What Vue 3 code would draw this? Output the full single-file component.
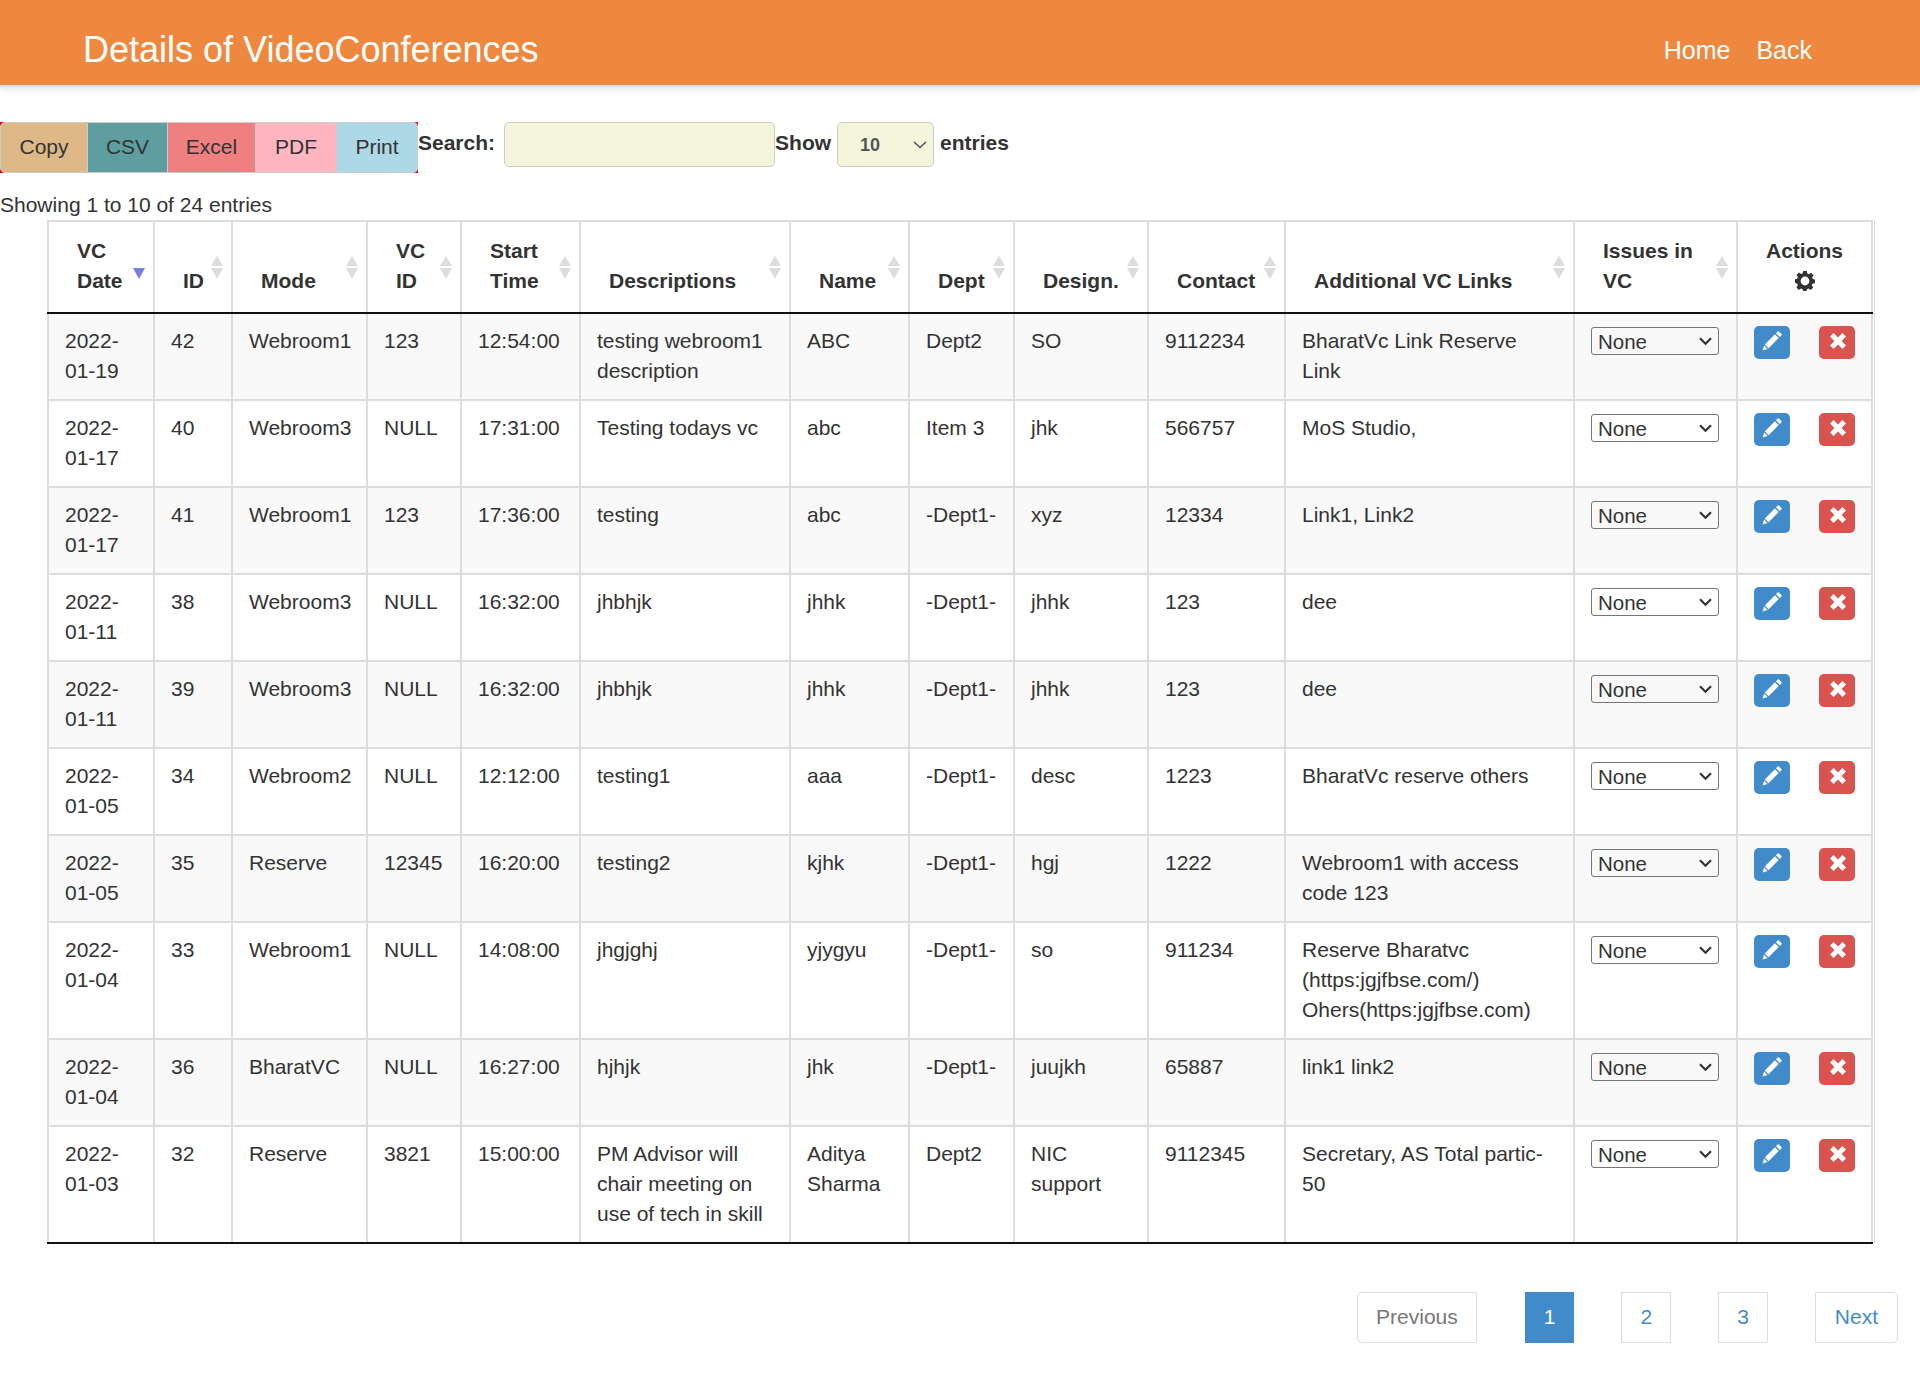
<template>
  <div class="page">
    <header class="topbar">
      <h1 class="topbar__title">Details of VideoConferences</h1>
      <nav class="topbar__nav">
        <a href="#">Home</a>
        <a href="#">Back</a>
      </nav>
    </header>

    <div class="toolbar">
      <div class="exports">
        <button v-for="b in exportButtons" :key="b" class="exports__btn" :class="'exports__btn--' + b.toLowerCase()">{{ b }}</button>
      </div>
      <label class="toolbar__label toolbar__label--search">Search:</label>
      <input type="text" class="search" />
      <label class="toolbar__label">Show</label>
      <div class="length">
        <span>10</span>
        <svg width="14" height="8" viewBox="0 0 14 8"><path d="M1 1l6 5.5L13 1" fill="none" stroke="#555" stroke-width="1.6" /></svg>
      </div>
      <label class="toolbar__label">entries</label>
    </div>

    <p class="info">Showing 1 to 10 of 24 entries</p>

    <div class="grid-wrap">
      <table class="grid">
        <colgroup>
          <col v-for="w in colWidths" :key="w.id" :style="{ width: w.px + 'px' }" />
        </colgroup>
        <thead>
          <tr>
            <th v-for="h in headers" :key="h.label">
              {{ h.label }}
              <svg class="sort" width="12" height="23" viewBox="0 0 12 23">
                <path v-if="h.sort === 'both'" d="M6 0l6 10H0z" fill="#ddd" />
                <path d="M0 12h12L6 23z" :fill="h.sort === 'both' ? '#ddd' : '#7a7ede'" />
              </svg>
            </th>
            <th class="grid__actions-head">
              Actions
              <svg class="gear" width="20" height="20" viewBox="0 0 20 20">
                <path fill-rule="evenodd" fill="#333" d="M8.2 0h3.6l.5 2.6 1.6.7 2.2-1.5 2.5 2.5-1.5 2.2.7 1.6 2.2.5v3.6l-2.6.5-.7 1.6 1.5 2.2-2.5 2.5-2.2-1.5-1.6.7-.5 2.6H8.2l-.5-2.6-1.6-.7-2.2 1.5-2.5-2.5 1.5-2.2-.7-1.6L0 11.8V8.2l2.2-.5.7-1.6-1.5-2.2 2.5-2.5 2.2 1.5 1.6-.7zM10 5.6a4.4 4.4 0 1 0 0 8.8 4.4 4.4 0 0 0 0-8.8z" />
              </svg>
            </th>
          </tr>
        </thead>
        <tbody>
          <tr v-for="r in rows" :key="r.id">
            <td>{{ r.date }}</td>
            <td>{{ r.id }}</td>
            <td>{{ r.mode }}</td>
            <td>{{ r.vcId }}</td>
            <td>{{ r.time }}</td>
            <td>{{ r.desc }}</td>
            <td>{{ r.name }}</td>
            <td>{{ r.dept }}</td>
            <td>{{ r.design }}</td>
            <td>{{ r.contact }}</td>
            <td>{{ r.links }}</td>
            <td>
              <div class="issue-wrap">
                <select class="issue">
                  <option>None</option>
                </select>
                <svg class="issue-wrap__arrow" width="13" height="9" viewBox="0 0 13 9">
                  <path d="M1 1.2l5.5 5.6L12 1.2" fill="none" stroke="#333" stroke-width="2.2" />
                </svg>
              </div>
            </td>
            <td>
              <div class="actions">
                <button class="icon-btn icon-btn--edit">
                  <svg width="20" height="20" viewBox="0 0 20 20">
                    <path fill="#fff" d="M14 2.2 15.6.6a1 1 0 0 1 1.4 0l2.4 2.4a1 1 0 0 1 0 1.4L17.8 6zM12.9 3.3l3.8 3.8L6.6 17.2 2.8 13.4zM2.1 14.4l3.5 3.5L.6 19.4z" />
                  </svg>
                </button>
                <button class="icon-btn icon-btn--remove">
                  <svg width="18" height="18" viewBox="0 0 18 18">
                    <path fill="#fff" d="M4.6 1 9 5.4 13.4 1 17 4.6 12.6 9 17 13.4 13.4 17 9 12.6 4.6 17 1 13.4 5.4 9 1 4.6z" />
                  </svg>
                </button>
              </div>
            </td>
          </tr>
        </tbody>
      </table>
    </div>

    <div class="pager">
      <a href="#" class="pager__item pager__item--prev">Previous</a>
      <a href="#" class="pager__item pager__item--active">1</a>
      <a href="#" class="pager__item pager__item--num">2</a>
      <a href="#" class="pager__item pager__item--num">3</a>
      <a href="#" class="pager__item pager__item--next">Next</a>
    </div>
  </div>
</template>

<script setup>
const exportButtons = ['Copy', 'CSV', 'Excel', 'PDF', 'Print']

const colWidths = [106, 78, 135, 94, 119, 210, 119, 105, 134, 137, 289, 163, 135].map((px, id) => ({ id, px }))

const headers = [
  { label: 'VC Date', sort: 'desc' },
  { label: 'ID', sort: 'both' },
  { label: 'Mode', sort: 'both' },
  { label: 'VC ID', sort: 'both' },
  { label: 'Start Time', sort: 'both' },
  { label: 'Descriptions', sort: 'both' },
  { label: 'Name', sort: 'both' },
  { label: 'Dept', sort: 'both' },
  { label: 'Design.', sort: 'both' },
  { label: 'Contact', sort: 'both' },
  { label: 'Additional VC Links', sort: 'both' },
  { label: 'Issues in VC', sort: 'both' }
]

const rows = [
  { id: 42, date: '2022-01-19', mode: 'Webroom1', vcId: '123', time: '12:54:00', desc: 'testing webroom1 description', name: 'ABC', dept: 'Dept2', design: 'SO', contact: '9112234', links: 'BharatVc Link Reserve Link' },
  { id: 40, date: '2022-01-17', mode: 'Webroom3', vcId: 'NULL', time: '17:31:00', desc: 'Testing todays vc', name: 'abc', dept: 'Item 3', design: 'jhk', contact: '566757', links: 'MoS Studio,' },
  { id: 41, date: '2022-01-17', mode: 'Webroom1', vcId: '123', time: '17:36:00', desc: 'testing', name: 'abc', dept: '-Dept1-', design: 'xyz', contact: '12334', links: 'Link1, Link2' },
  { id: 38, date: '2022-01-11', mode: 'Webroom3', vcId: 'NULL', time: '16:32:00', desc: 'jhbhjk', name: 'jhhk', dept: '-Dept1-', design: 'jhhk', contact: '123', links: 'dee' },
  { id: 39, date: '2022-01-11', mode: 'Webroom3', vcId: 'NULL', time: '16:32:00', desc: 'jhbhjk', name: 'jhhk', dept: '-Dept1-', design: 'jhhk', contact: '123', links: 'dee' },
  { id: 34, date: '2022-01-05', mode: 'Webroom2', vcId: 'NULL', time: '12:12:00', desc: 'testing1', name: 'aaa', dept: '-Dept1-', design: 'desc', contact: '1223', links: 'BharatVc reserve others' },
  { id: 35, date: '2022-01-05', mode: 'Reserve', vcId: '12345', time: '16:20:00', desc: 'testing2', name: 'kjhk', dept: '-Dept1-', design: 'hgj', contact: '1222', links: 'Webroom1 with access code 123' },
  { id: 33, date: '2022-01-04', mode: 'Webroom1', vcId: 'NULL', time: '14:08:00', desc: 'jhgjghj', name: 'yjygyu', dept: '-Dept1-', design: 'so', contact: '911234', links: 'Reserve Bharatvc (https:jgjfbse.com/) Ohers(https:jgjfbse.com)' },
  { id: 36, date: '2022-01-04', mode: 'BharatVC', vcId: 'NULL', time: '16:27:00', desc: 'hjhjk', name: 'jhk', dept: '-Dept1-', design: 'juujkh', contact: '65887', links: 'link1 link2' },
  { id: 32, date: '2022-01-03', mode: 'Reserve', vcId: '3821', time: '15:00:00', desc: 'PM Advisor will chair meeting on use of tech in skill', name: 'Aditya Sharma', dept: 'Dept2', design: 'NIC support', contact: '9112345', links: 'Secretary, AS Total partic-50' }
]
</script>

<style>
body {
  margin: 0;
  background: #fff;
}
</style>

<style scoped>
.page {
  font-family: "Liberation Sans", Arial, sans-serif;
  font-size: 21px;
  line-height: 30px;
  color: #333;
  min-height: 1393px;
}
.topbar {
  box-sizing: border-box;
  display: flex;
  align-items: center;
  justify-content: space-between;
  height: 85px;
  padding: 14px 108px 0 83px;
  background: #ef883f;
  box-shadow: 0 2px 0 #e2e2e2, 0 4px 6px rgba(0, 0, 0, 0.12);
  color: #fff;
}
.topbar__title {
  margin: 0;
  font-size: 36px;
  font-weight: 400;
  line-height: 40px;
}
.topbar__nav {
  display: flex;
  gap: 26px;
}
.topbar__nav a {
  color: #fff;
  font-size: 25px;
  text-decoration: none;
}
.toolbar {
  display: flex;
  align-items: flex-start;
  margin-top: 37px;
}
.exports {
  display: flex;
  background: #f00;
}
.exports__btn {
  height: 51px;
  padding: 0 0 2px;
  border: 1px solid #ccc;
  border-radius: 5px;
  font: inherit;
  color: #333;
}
.exports__btn:not(:first-child) {
  border-top-left-radius: 0;
  border-bottom-left-radius: 0;
  border-left: 0;
}
.exports__btn:not(:last-child) {
  border-top-right-radius: 0;
  border-bottom-right-radius: 0;
}
.exports__btn--copy {
  width: 88px;
  background: #deb887;
}
.exports__btn--csv {
  width: 80px;
  background: #5f9ea0;
}
.exports__btn--excel {
  width: 88px;
  background: #f08080;
}
.exports__btn--pdf {
  width: 81px;
  background: #ffb6c1;
}
.exports__btn--print {
  width: 81px;
  background: #add8e6;
}
.toolbar__label {
  margin: 6px 6px 0 0;
  font-weight: 700;
}
.toolbar__label--search {
  margin-right: 9px;
}
.search {
  box-sizing: border-box;
  width: 271px;
  height: 45px;
  border: 1px solid #ccc;
  border-radius: 5px;
  background: #f5f5dc;
}
.length {
  display: flex;
  align-items: center;
  justify-content: space-between;
  box-sizing: border-box;
  width: 97px;
  height: 45px;
  margin-right: 6px;
  padding: 0 6px 0 22px;
  border: 1px solid #ccc;
  border-radius: 5px;
  background: #f5f5dc;
  font-size: 18px;
  font-weight: 700;
  color: #555;
}
.info {
  margin: 17px 0 0;
  line-height: 30px;
}
.grid-wrap {
  width: fit-content;
  margin-left: 47px;
  padding-right: 1px;
  border-right: 1px solid #ddd;
}
.grid {
  box-sizing: border-box;
  width: 1826px;
  table-layout: fixed;
  border-collapse: collapse;
}
.grid th,
.grid td {
  border: 2px solid #ddd;
}
.grid th {
  position: relative;
  box-sizing: border-box;
  padding: 14px 36px 16px 28px;
  border-bottom: 2px solid #111;
  text-align: left;
  vertical-align: bottom;
  font-weight: 700;
}
.grid td {
  padding: 12px 15px 13px 16px;
  vertical-align: top;
}
.grid tbody tr:nth-child(odd) td {
  background: #f9f9f9;
}
.grid tbody tr:last-child td {
  border-bottom: 2px solid #111;
}
.grid .grid__actions-head {
  padding-right: 28px;
  text-align: center;
}
.sort {
  position: absolute;
  top: 34px;
  right: 8px;
}
.gear {
  display: block;
  margin: 5px auto;
}
.issue-wrap {
  position: relative;
  width: 128px;
  margin-top: 1px;
}
.issue-wrap__arrow {
  position: absolute;
  top: 10px;
  right: 7px;
  pointer-events: none;
}
.issue {
  display: block;
  box-sizing: border-box;
  width: 100%;
  height: 28px;
  padding: 0 0 0 6px;
  border: 1px solid #767676;
  border-radius: 3px;
  background: transparent;
  appearance: none;
  font: 20.5px "Liberation Sans", Arial, sans-serif;
  color: #333;
}
.actions {
  display: flex;
  justify-content: space-between;
  width: 101px;
}
.icon-btn {
  display: flex;
  align-items: center;
  justify-content: center;
  width: 36px;
  height: 33px;
  padding: 0 0 3px;
  border: 0;
  border-radius: 5px;
}
.icon-btn--edit {
  background: #428bca;
}
.icon-btn--remove {
  background: #d9534f;
  padding-left: 1px;
}
.pager {
  display: flex;
  justify-content: flex-end;
  gap: 47px;
  margin: 48px 22px 0 0;
}
.pager__item {
  box-sizing: border-box;
  height: 51px;
  padding: 9px 18px;
  border: 1px solid #ddd;
  color: #428bca;
  text-decoration: none;
  background: #fff;
}
.pager__item--prev {
  margin-right: 1px;
  color: #777;
  border-radius: 5px 0 0 5px;
}
.pager__item--next {
  padding: 9px 19px;
  border-radius: 0 5px 5px 0;
}
.pager__item--active {
  background: #428bca;
  border-color: #428bca;
  color: #fff;
}
</style>
